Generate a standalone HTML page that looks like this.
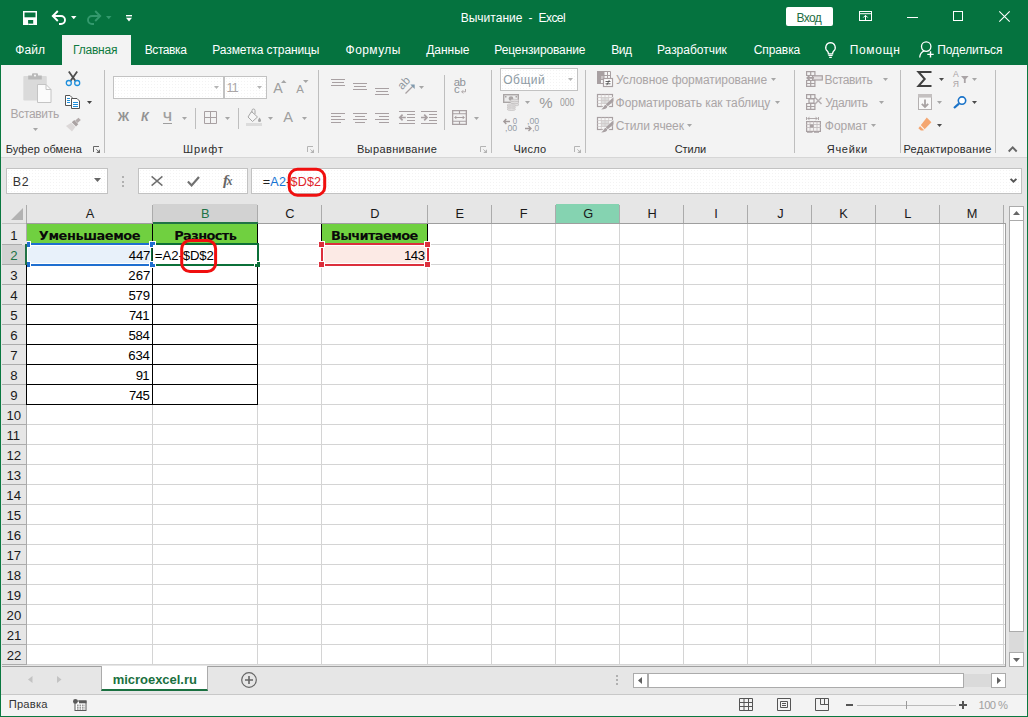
<!DOCTYPE html>
<html lang="ru"><head><meta charset="utf-8"><title>Excel</title>
<style>
*{box-sizing:border-box;margin:0;padding:0}
html,body{width:1028px;height:717px;overflow:hidden;background:#fff}
body{font-family:"Liberation Sans",sans-serif;font-size:12px;color:#444;position:relative}
.a{position:absolute}
.t{position:absolute;white-space:nowrap;line-height:1}
svg{position:absolute;overflow:visible}
#title{left:0;top:0;width:1028px;height:65px;background:#05733f}
#ribbon{left:1px;top:65px;width:1026px;height:92px;background:#f3f3f3}
#fbar{left:1px;top:157px;width:1026px;height:47px;background:#e6e6e6;border-top:1px solid #d6d6d6}
.tab{color:#fff;font-size:12.4px;top:44px}
.gl{color:#444;font-size:11.6px;top:143px;letter-spacing:.25px}
.dis{color:#a6a6a6}
.sep{width:1px;background:#bebebe}
.ch{position:absolute;top:205px;height:19px;text-align:center;font-size:13.6px;line-height:19px;color:#333}
.rh{position:absolute;left:2px;width:24px;height:20px;text-align:center;font-size:13.6px;line-height:20px;color:#333}
.num{position:absolute;font-size:13.4px;line-height:20px;color:#000;text-align:right;white-space:nowrap}
.hd{position:absolute;font-family:"DejaVu Sans","Liberation Sans",sans-serif;font-weight:bold;font-size:12.6px;line-height:20px;color:#111;text-align:center;white-space:nowrap;background:#70d04a}
</style></head>
<body>
<div class="a" id="title"></div>
<svg style="left:23px;top:11px" width="14" height="14" viewBox="0 0 14 14"><rect x="0.750" y="0.750" width="12.500" height="12.500" fill="none" stroke="#fff" stroke-width="1.500"/><rect x="1" y="6.300" width="12" height="7" fill="#fff"/><rect x="5.300" y="9" width="4.800" height="5" fill="#05733f"/><rect x="5.300" y="12.400" width="4.800" height="1.600" fill="#fff"/><rect x="5.300" y="9" width="4.800" height="3.400" fill="#05733f"/></svg>
<svg style="left:51px;top:10px" width="16" height="15" viewBox="0 0 16 15"><path d="M1.800 6h8.200a4 4 0 0 1 0 8H8" fill="none" stroke="#fff" stroke-width="1.900"/><path d="M6.800 1L1.800 6l5 5" fill="none" stroke="#fff" stroke-width="1.900"/></svg>
<svg style="left:71px;top:16px" width="5.500" height="3.200" viewBox="0 0 5.500 3.200"><path d="M0 0h5.500L2.750 3.200z" fill="#fff"/></svg>
<svg style="left:86px;top:10px" width="16" height="15" viewBox="0 0 16 15"><path d="M14.200 6H6a4 4 0 0 0 0 8h2" fill="none" stroke="#33996d" stroke-width="1.900"/><path d="M9.200 1l5 5-5 5" fill="none" stroke="#33996d" stroke-width="1.900"/></svg>
<svg style="left:106px;top:16px" width="5.500" height="3.200" viewBox="0 0 5.500 3.200"><path d="M0 0h5.500L2.750 3.200z" fill="#33996d"/></svg>
<svg style="left:125.500px;top:14.500px" width="6" height="7" viewBox="0 0 6 7"><rect x="0" y="0" width="6" height="1.400" fill="#fff"/><path d="M0 2.800h6L3 6.600z" fill="#fff"/></svg>
<div class="t" style="left:460.72px;top:11.64px;font-size:12px;color:#fff;letter-spacing:0.007px;">Вычитание</div>
<div class="t" style="left:528.47px;top:11.64px;font-size:12px;color:#fff;letter-spacing:0.57px;">-</div>
<div class="t" style="left:538.52px;top:11.64px;font-size:12px;color:#fff;letter-spacing:-0.564px;">Excel</div>
<div class="a" style="left:786px;top:7px;width:47px;height:19px;background:#fff;border-radius:2px"></div>
<div class="t" style="left:796.62px;top:11.64px;font-size:12px;color:#1e6e44;letter-spacing:-0.697px;">Вход</div>
<svg style="left:859px;top:10.500px" width="13" height="10" viewBox="0 0 13 10"><rect x="0.500" y="0.500" width="12" height="9" fill="none" stroke="#fff"/><path d="M0.500 2.700h12M6.500 9V4.500M4.300 6.500l2.200-2.200 2.200 2.200" fill="none" stroke="#fff"/></svg>
<div class="a" style="left:907px;top:17px;width:11px;height:1px;background:#fff"></div>
<div class="a" style="left:953px;top:11px;width:10px;height:10px;border:1px solid #fff"></div>
<svg style="left:999px;top:11px" width="11" height="11" viewBox="0 0 11 11"><path d="M0.3 0.3l10.4 10.4M10.7 0.3L0.3 10.7" stroke="#fff" stroke-width="1.1"/></svg>
<div class="a" style="left:62px;top:35px;width:69px;height:30px;background:#f3f3f3"></div>
<div class="t" style="left:15.31px;top:44.24px;font-size:12px;color:#fff;letter-spacing:0.107px;">Файл</div>
<div class="t" style="left:73.02px;top:44.24px;font-size:12px;color:#0e7a40;letter-spacing:-0.205px;">Главная</div>
<div class="t" style="left:144.72px;top:44.24px;font-size:12px;color:#fff;letter-spacing:-0.415px;">Вставка</div>
<div class="t" style="left:212.32px;top:44.24px;font-size:12px;color:#fff;letter-spacing:-0.107px;">Разметка страницы</div>
<div class="t" style="left:345.61px;top:44.24px;font-size:12px;color:#fff;letter-spacing:0.429px;">Формулы</div>
<div class="t" style="left:426.21px;top:44.24px;font-size:12px;color:#fff;letter-spacing:-0.006px;">Данные</div>
<div class="t" style="left:494.32px;top:44.24px;font-size:12px;color:#fff;letter-spacing:-0.118px;">Рецензирование</div>
<div class="t" style="left:611.32px;top:44.24px;font-size:12px;color:#fff;letter-spacing:-0.56px;">Вид</div>
<div class="t" style="left:657.02px;top:44.24px;font-size:12px;color:#fff;letter-spacing:-0.015px;">Разработчик</div>
<div class="t" style="left:753.69px;top:44.24px;font-size:12px;color:#fff;letter-spacing:-0.084px;">Справка</div>
<div class="t" style="left:849.73px;top:44.24px;font-size:12px;color:#fff;letter-spacing:0.676px;">Помощн</div>
<div class="t" style="left:937.33px;top:44.24px;font-size:12px;color:#fff;letter-spacing:-0.125px;">Поделиться</div>
<svg style="left:825px;top:42px" width="11" height="16" viewBox="0 0 11 16"><path d="M5.500 0.700a4.800 4.800 0 0 1 3 8.500c-.7.700-.9 1.400-.9 2.600H3.400c0-1.200-.2-1.900-.9-2.600A4.800 4.800 0 0 1 5.500 .7z" fill="none" stroke="#fff" stroke-width="1.300"/><path d="M3.400 13.300h4.200M4.200 15.300h2.600" stroke="#fff" stroke-width="1.200"/></svg>
<svg style="left:919px;top:41px" width="16" height="17" viewBox="0 0 16 17"><circle cx="7.200" cy="5.600" r="4.700" fill="none" stroke="#fff" stroke-width="1.300"/><path d="M0.700 16.500c.3-3.500 2-5.600 4.300-6.600" fill="none" stroke="#fff" stroke-width="1.300"/><path d="M11.500 10.200v6.400M8.300 13.400h6.400" stroke="#fff" stroke-width="1.400"/></svg>
<div class="a" id="ribbon"></div>
<div class="a sep" style="left:104px;top:70px;height:83px"></div>
<div class="a sep" style="left:318px;top:70px;height:83px"></div>
<div class="a sep" style="left:491px;top:70px;height:83px"></div>
<div class="a sep" style="left:585px;top:70px;height:83px"></div>
<div class="a sep" style="left:794px;top:70px;height:83px"></div>
<div class="a sep" style="left:900px;top:70px;height:83px"></div>
<div class="a sep" style="left:995px;top:70px;height:83px"></div>
<div class="t" style="left:5.7px;top:144.19px;font-size:11px;color:#2b2b2b;letter-spacing:0.132px;">Буфер обмена</div>
<div class="t" style="left:183.1px;top:144.19px;font-size:11px;color:#2b2b2b;letter-spacing:0.915px;">Шрифт</div>
<div class="t" style="left:356.9px;top:144.19px;font-size:11px;color:#2b2b2b;letter-spacing:0.386px;">Выравнивание</div>
<div class="t" style="left:513.44px;top:144.19px;font-size:11px;color:#2b2b2b;letter-spacing:0.252px;">Число</div>
<div class="t" style="left:674.64px;top:144.19px;font-size:11px;color:#2b2b2b;letter-spacing:-0.042px;">Стили</div>
<div class="t" style="left:826.78px;top:144.19px;font-size:11px;color:#2b2b2b;letter-spacing:0.717px;">Ячейки</div>
<div class="t" style="left:903.4px;top:144.19px;font-size:11px;color:#2b2b2b;letter-spacing:0.313px;">Редактирование</div>
<svg style="left:93px;top:146px" width="8" height="8" viewBox="0 0 8 8"><path d="M0.500 6V0.500H6" fill="none" stroke="#666"/><path d="M7 3.200V7H3.200z" fill="#666"/><path d="M3.300 3.300L5.500 5.500" stroke="#666" stroke-width=".9"/></svg>
<svg style="left:307px;top:146px" width="8" height="8" viewBox="0 0 8 8"><path d="M0.500 6V0.500H6" fill="none" stroke="#b4b4b4"/><path d="M7 3.200V7H3.200z" fill="#b4b4b4"/><path d="M3.300 3.300L5.500 5.500" stroke="#b4b4b4" stroke-width=".9"/></svg>
<svg style="left:480px;top:146px" width="8" height="8" viewBox="0 0 8 8"><path d="M0.500 6V0.500H6" fill="none" stroke="#b4b4b4"/><path d="M7 3.200V7H3.200z" fill="#b4b4b4"/><path d="M3.300 3.300L5.500 5.500" stroke="#b4b4b4" stroke-width=".9"/></svg>
<svg style="left:574px;top:146px" width="8" height="8" viewBox="0 0 8 8"><path d="M0.500 6V0.500H6" fill="none" stroke="#b4b4b4"/><path d="M7 3.200V7H3.200z" fill="#b4b4b4"/><path d="M3.300 3.300L5.500 5.500" stroke="#b4b4b4" stroke-width=".9"/></svg>
<svg style="left:1007.800px;top:146px" width="9.400" height="6" viewBox="0 0 9.400 6"><path d="M0.700 5.500L4.700 1.300l4 4.200" fill="none" stroke="#666" stroke-width="1.900"/></svg>
<svg style="left:23px;top:73px" width="29" height="30" viewBox="0 0 29 30"><rect x="0.300" y="3" width="23.500" height="24.600" rx="1" fill="#dadada"/><path d="M5.200 2.500h3.800V1.200a1 1 0 0 1 1-1h4a1 1 0 0 1 1 1v1.300h3.800v4.100H5.200z" fill="#b9b9b9"/><circle cx="12" cy="2.600" r="1.100" fill="#f3f3f3"/><path d="M14.500 11.500h8.500l5 5V29.500h-13.500z" fill="#fbfbfb" stroke="#c4c4c4"/><path d="M23 11.500v5h5" fill="none" stroke="#c4c4c4"/></svg>
<div class="t" style="left:10.62px;top:107.54px;font-size:12px;color:#aaa5a6;letter-spacing:-0.332px;">Вставить</div>
<svg style="left:33px;top:128px" width="5" height="3" viewBox="0 0 5 3"><path d="M0 0h5L2.5 3z" fill="#a6a6a6"/></svg>
<svg style="left:65px;top:71px" width="16" height="16" viewBox="0 0 16 16"><path d="M3.800 0.500l6.700 9.500M12.200 0.500L5.500 10" stroke="#4d4d4d" stroke-width="1.800" fill="none"/><circle cx="3.800" cy="12" r="2.500" fill="none" stroke="#1e8fdc" stroke-width="1.300"/><circle cx="12.200" cy="12" r="2.500" fill="none" stroke="#1e8fdc" stroke-width="1.300"/></svg>
<svg style="left:65px;top:95px" width="16" height="14" viewBox="0 0 16 14"><path d="M0.500 0.500h4.500l2 2v8h-6.500z" fill="#fff" stroke="#555"/><path d="M2 3.500h3M2 5.500h3M2 7.500h3" stroke="#1e8fdc"/><path d="M6.500 3.500h5.500l2.500 2.500v7.500h-8z" fill="#fff" stroke="#555"/><path d="M8 7.500h5M8 9.500h5M8 11.500h5" stroke="#1e8fdc"/></svg>
<svg style="left:87px;top:101px" width="5" height="3" viewBox="0 0 5 3"><path d="M0 0h5L2.5 3z" fill="#444"/></svg>
<svg style="left:65px;top:117px" width="17" height="15" viewBox="0 0 17 15"><path d="M13.500 0.800l2.300 2.300-3.300 3-2.300-2.500z" fill="#b4acac"/><path d="M9.300 3l4 4.200-2.300 2.200-4.200-4.200z" fill="#aaa2a2"/><path d="M6.200 5.800l4.200 4.200-3.400 4.500-6-5.500z" fill="#dcd8d8"/></svg>
<div class="a" style="left:113px;top:76px;width:111px;height:23px;background:#fff radial-gradient(circle,#f3f3f3 .55px,transparent .75px) 0 0/3px 3px;border:1px solid #c2c2c2"></div>
<div class="a" style="left:224px;top:76px;width:43px;height:23px;background:#fff radial-gradient(circle,#f3f3f3 .55px,transparent .75px) 0 0/3px 3px;border:1px solid #c2c2c2"></div>
<svg style="left:214px;top:86px" width="5" height="3" viewBox="0 0 5 3"><path d="M0 0h5L2.5 3z" fill="#b5b5b5"/></svg>
<svg style="left:257px;top:86px" width="5" height="3" viewBox="0 0 5 3"><path d="M0 0h5L2.5 3z" fill="#b5b5b5"/></svg>
<div class="t" style="left:226.56px;top:81.5px;font-size:12.4px;color:#aaa5a6;letter-spacing:-0.743px;">11</div>
<div class="t" style="left:273.27px;top:81.18px;font-size:14.2px;color:#9e9e9e;letter-spacing:0.584px;">A</div>
<svg style="left:281px;top:80px" width="5.500" height="3" viewBox="0 0 5.500 3"><path d="M0 3h5.500L2.750 0z" fill="#a6a6a6"/></svg>
<div class="t" style="left:296.28px;top:83.55px;font-size:11.4px;color:#9e9e9e;letter-spacing:0.141px;">A</div>
<svg style="left:303px;top:80px" width="5.5" height="3" viewBox="0 0 5.5 3"><path d="M0 0h5.5L2.75 3z" fill="#a6a6a6"/></svg>
<div class="t" style="left:117.74px;top:111.13px;font-size:12.6px;color:#939393;letter-spacing:0.814px;font-weight:bold;">Ж</div>
<div class="t" style="left:140.98px;top:111.13px;font-size:12.6px;color:#939393;letter-spacing:0.056px;font-weight:bold;font-style:italic;">К</div>
<div class="t" style="left:163.12px;top:111.13px;font-size:12.6px;color:#a0a0a0;letter-spacing:0.373px;font-weight:bold;">Ч</div>
<div class="a" style="left:163px;top:123px;width:9px;height:1px;background:#9e9e9e"></div>
<svg style="left:182px;top:117px" width="5" height="3" viewBox="0 0 5 3"><path d="M0 0h5L2.5 3z" fill="#a6a6a6"/></svg>
<div class="a sep" style="left:195px;top:108px;height:21px"></div>
<svg style="left:204px;top:111px" width="13" height="13" viewBox="0 0 13 13"><path d="M0.500 0.500h12v12h-12zM6.500 0.500v12M0.500 6.500h12" fill="none" stroke="#a8a0a2"/></svg>
<svg style="left:225px;top:117px" width="5" height="3" viewBox="0 0 5 3"><path d="M0 0h5L2.5 3z" fill="#a6a6a6"/></svg>
<div class="a sep" style="left:238px;top:108px;height:21px"></div>
<svg style="left:246px;top:109px" width="17" height="17" viewBox="0 0 17 17"><path d="M5.500 2.500l6 5.500-5 4.500-4.500-4.500z" fill="#f6f6f6" stroke="#a6a6a6"/><path d="M6 4V1.500a1.500 1.500 0 0 1 3 0V5" fill="none" stroke="#a6a6a6"/><path d="M13.500 8.500c1 1.500 1.500 2.300 1.500 3a1.500 1.500 0 0 1-3 0c0-.7.500-1.500 1.500-3z" fill="#a6a6a6"/><rect x="0" y="14" width="16" height="3" fill="#dcdcdc"/></svg>
<svg style="left:268px;top:117px" width="5" height="3" viewBox="0 0 5 3"><path d="M0 0h5L2.5 3z" fill="#a6a6a6"/></svg>
<div class="t" style="left:283.27px;top:110.04px;font-size:14.6px;color:#9e9e9e;letter-spacing:0.319px;">A</div>
<svg style="left:302px;top:117px" width="5" height="3" viewBox="0 0 5 3"><path d="M0 0h5L2.5 3z" fill="#a6a6a6"/></svg>
<svg style="left:331px;top:79px" width="14" height="9" viewBox="0 0 14 9"><rect x="0.0" y="0" width="14" height="1" fill="#a8a0a2"/><rect x="1.0" y="3" width="12" height="1" fill="#a8a0a2"/><rect x="0.0" y="6" width="14" height="1" fill="#a8a0a2"/></svg>
<svg style="left:353px;top:83px" width="14" height="9" viewBox="0 0 14 9"><rect x="0.0" y="0" width="14" height="1" fill="#a8a0a2"/><rect x="1.0" y="3" width="12" height="1" fill="#a8a0a2"/><rect x="0.0" y="6" width="14" height="1" fill="#a8a0a2"/></svg>
<svg style="left:375px;top:88px" width="14" height="9" viewBox="0 0 14 9"><rect x="0.0" y="0" width="14" height="1" fill="#a8a0a2"/><rect x="1.0" y="3" width="12" height="1" fill="#a8a0a2"/><rect x="0.0" y="6" width="14" height="1" fill="#a8a0a2"/></svg>
<svg style="left:331px;top:113px" width="14" height="12" viewBox="0 0 14 12"><rect x="0" y="0" width="14" height="1" fill="#a8a0a2"/><rect x="0" y="3" width="10" height="1" fill="#a8a0a2"/><rect x="0" y="6" width="14" height="1" fill="#a8a0a2"/><rect x="0" y="9" width="10" height="1" fill="#a8a0a2"/></svg>
<svg style="left:353px;top:113px" width="14" height="12" viewBox="0 0 14 12"><rect x="0.0" y="0" width="14" height="1" fill="#a8a0a2"/><rect x="2.0" y="3" width="10" height="1" fill="#a8a0a2"/><rect x="0.0" y="6" width="14" height="1" fill="#a8a0a2"/><rect x="2.0" y="9" width="10" height="1" fill="#a8a0a2"/></svg>
<svg style="left:375px;top:113px" width="14" height="12" viewBox="0 0 14 12"><rect x="0" y="0" width="14" height="1" fill="#a8a0a2"/><rect x="4" y="3" width="10" height="1" fill="#a8a0a2"/><rect x="0" y="6" width="14" height="1" fill="#a8a0a2"/><rect x="4" y="9" width="10" height="1" fill="#a8a0a2"/></svg>
<svg style="left:398px;top:78px" width="18" height="17" viewBox="0 0 18 17"><text x="0" y="0" font-size="11.400" font-family="Liberation Sans,sans-serif" fill="#8e969e" transform="translate(4.200 12.200) rotate(-47)">ab</text><path d="M7.500 15.500L15 8" fill="none" stroke="#a8a0a2" stroke-width="1.300"/><path d="M12.300 6.500h4.400v4.400z" fill="#7f9aae"/></svg>
<svg style="left:419px;top:86px" width="5" height="3" viewBox="0 0 5 3"><path d="M0 0h5L2.5 3z" fill="#a6a6a6"/></svg>
<svg style="left:399px;top:111px" width="16" height="13" viewBox="0 0 16 13"><path d="M0 0.500h16M8 3.500h8M8 6.500h8M8 9.500h8M0 12.500h16" stroke="#a8a0a2"/><path d="M6.800 6.500H1M3.600 3.600L0.800 6.500l2.800 2.900" fill="none" stroke="#a8a0a2" stroke-width="1.700"/></svg>
<svg style="left:421px;top:111px" width="16" height="13" viewBox="0 0 16 13"><path d="M0 0.500h16M8 3.500h8M8 6.500h8M8 9.500h8M0 12.500h16" stroke="#a8a0a2"/><path d="M0 6.500h5.800M3.200 3.600L6 6.500 3.200 9.400" fill="none" stroke="#a8a0a2" stroke-width="1.700"/></svg>
<div class="a sep" style="left:444px;top:75px;height:55px"></div>
<div class="t" style="left:453.72px;top:76.75px;font-size:11.4px;color:#8e9298;letter-spacing:-0.617px;">ab</div>
<div class="t" style="left:454.12px;top:84.15px;font-size:11.4px;color:#8e9298;letter-spacing:-0.515px;">c</div>
<svg style="left:460.500px;top:89px" width="5" height="5" viewBox="0 0 5 5"><path d="M4.500 0v2.800H0.800M2.200 1.200L0.700 2.800l1.500 1.600" fill="none" stroke="#a8a0a2" stroke-width=".9"/></svg>
<svg style="left:452px;top:110px" width="15" height="15" viewBox="0 0 15 15"><path d="M0.650 0.650h13.700v13.700h-13.700z" fill="none" stroke="#a8a0a2" stroke-width="1.300"/><path d="M0.500 3.700h14M0.500 11.300h14M7.500 0.500v3.200M7.500 11.300v3.200" fill="none" stroke="#a8a0a2" stroke-width="1.100"/><path d="M2.800 7.500h9.400M4.400 5.900L2.800 7.500l1.600 1.600M10.600 5.900l1.600 1.600-1.600 1.600" fill="none" stroke="#a8a0a2"/></svg>
<svg style="left:474.2px;top:117px" width="5" height="3" viewBox="0 0 5 3"><path d="M0 0h5L2.5 3z" fill="#a6a6a6"/></svg>
<div class="a" style="left:500px;top:68px;width:78px;height:23px;background:#fff radial-gradient(circle,#f3f3f3 .55px,transparent .75px) 0 0/3px 3px;border:1px solid #c2c2c2"></div>
<div class="t" style="left:503.23px;top:73.84px;font-size:12px;color:#8e9ba4;letter-spacing:0.479px;">Общий</div>
<svg style="left:568px;top:78px" width="5" height="3" viewBox="0 0 5 3"><path d="M0 0h5L2.5 3z" fill="#b5b5b5"/></svg>
<svg style="left:503px;top:94px" width="17" height="17" viewBox="0 0 17 17"><rect x="0.700" y="0.700" width="14.600" height="7.600" fill="#ececec" stroke="#aaa6a6" stroke-width="1.400"/><circle cx="8" cy="4.500" r="2.300" fill="#aaa6a6"/><rect x="2" y="2" width="1.500" height="1.500" fill="#aaa6a6"/><rect x="12.500" y="2" width="1.500" height="1.500" fill="#aaa6a6"/><g fill="#e2e0e0" stroke="#c2bebe" stroke-width=".7"><ellipse cx="11.800" cy="6.600" rx="4.200" ry="1.300"/><ellipse cx="11.800" cy="8.600" rx="4.200" ry="1.300"/><ellipse cx="11.800" cy="10.600" rx="4.200" ry="1.300"/><ellipse cx="8.300" cy="11.200" rx="4.200" ry="1.300"/><ellipse cx="8.300" cy="13.200" rx="4.200" ry="1.300"/><ellipse cx="8.300" cy="15.200" rx="4.200" ry="1.300"/></g></svg>
<svg style="left:525px;top:101px" width="5" height="3" viewBox="0 0 5 3"><path d="M0 0h5L2.5 3z" fill="#a6a6a6"/></svg>
<div class="t" style="left:539.17px;top:95.3px;font-size:15px;color:#9a9a9a;letter-spacing:0.032px;">%</div>
<div class="t" style="left:559.500px;top:97.500px;font-size:10px;color:#9a9a9a;transform:scaleX(.86);transform-origin:0 0">000</div>
<svg style="left:503px;top:118px" width="15" height="15" viewBox="0 0 15 15"><text x="9.800" y="5.800" font-size="8.800" font-family="Liberation Sans,sans-serif" fill="#939ca6" textLength="4.400" lengthAdjust="spacingAndGlyphs">0</text><text x="2" y="13.200" font-size="8.800" font-family="Liberation Sans,sans-serif" fill="#939ca6" textLength="12.200" lengthAdjust="spacingAndGlyphs">,00</text><path d="M7 3.500H0.800M3.300 1L0.800 3.500 3.300 6" fill="none" stroke="#a29a9a" stroke-width="1.300"/></svg>
<svg style="left:525px;top:118px" width="15" height="15" viewBox="0 0 15 15"><text x="2" y="5.800" font-size="8.800" font-family="Liberation Sans,sans-serif" fill="#939ca6" textLength="12.200" lengthAdjust="spacingAndGlyphs">,00</text><text x="7.200" y="13.200" font-size="8.800" font-family="Liberation Sans,sans-serif" fill="#939ca6" textLength="7" lengthAdjust="spacingAndGlyphs">,0</text><path d="M0 10.500h6M3.500 8L6 10.500 3.500 13" fill="none" stroke="#a29a9a" stroke-width="1.300"/></svg>
<div class="t" style="left:615.98px;top:73.84px;font-size:12px;color:#aaa5a6;letter-spacing:-0.067px;">Условное форматирование</div>
<svg style="left:771px;top:77.8px" width="5" height="3" viewBox="0 0 5 3"><path d="M0 0h5L2.5 3z" fill="#a6a6a6"/></svg>
<div class="t" style="left:615.61px;top:96.84px;font-size:12px;color:#aaa5a6;letter-spacing:-0.058px;">Форматировать как таблицу</div>
<svg style="left:775px;top:100.8px" width="5" height="3" viewBox="0 0 5 3"><path d="M0 0h5L2.5 3z" fill="#a6a6a6"/></svg>
<div class="t" style="left:615.69px;top:119.84px;font-size:12px;color:#aaa5a6;letter-spacing:-0.1px;">Стили ячеек</div>
<svg style="left:687px;top:123.8px" width="5" height="3" viewBox="0 0 5 3"><path d="M0 0h5L2.5 3z" fill="#a6a6a6"/></svg>
<svg style="left:597px;top:71px" width="17" height="16" viewBox="0 0 17 16"><rect x="0" y="0" width="14" height="13" fill="#f6f6f6"/><rect x="0" y="0" width="7" height="5" fill="#a8a0a2"/><rect x="0" y="5" width="4" height="8" fill="#a8a0a2"/><rect x="4" y="5" width="3" height="3" fill="#c9c4c5"/><path d="M0.500 0.500h13v12h-13zM0.500 4.500h13M0.500 8.500h13M7 0.500v12M10.500 0.500v12" stroke="#a8a0a2" fill="none"/><rect x="6.500" y="7.500" width="9" height="8" fill="#fff" stroke="#a8a0a2" stroke-width="1.200"/><path d="M8.500 10.500h5M8.500 12.800h5M12.200 9.200l-2.400 5" stroke="#555" stroke-width=".9" fill="none"/></svg>
<svg style="left:597px;top:94px" width="17" height="16" viewBox="0 0 17 16"><rect x="0.500" y="0.500" width="15" height="12" fill="#f8f8f8" stroke="#a8a0a2" stroke-width="1.200"/><rect x="4" y="3.500" width="8" height="6" fill="#dcdcdc"/><path d="M0.500 3.500h15M0.500 6.500h15M0.500 9.500h15M4.300 0.500v12M8 0.500v12M11.700 0.500v12" stroke="#cfcaca" fill="none" stroke-width=".8"/><path d="M17 1.500L9.500 10l-2 0L5 13.500 3.500 16h6l2.500-3.500L17 6z" fill="#f3f3f3"/><path d="M16.500 3.200v4L10.800 12.200 8.800 10.200z" fill="#a8a0a2"/><path d="M8 11c1.300-.3 2.400.8 2.200 2-.3 1.600-2.500 2.300-6 2.600 1.800-1.200 2.300-3 3.800-4.600z" fill="#a8a0a2"/></svg>
<svg style="left:597px;top:117px" width="17" height="16" viewBox="0 0 17 16"><rect x="0.500" y="0.500" width="15" height="12" fill="#f8f8f8" stroke="#a8a0a2" stroke-width="1.200"/><rect x="4" y="3.500" width="8" height="6" fill="#dcdcdc"/><path d="M0.500 3.500h15M0.500 6.500h15M0.500 9.500h15M4.300 0.500v12M8 0.500v12M11.700 0.500v12" stroke="#cfcaca" fill="none" stroke-width=".8"/><path d="M17 1.500L9.500 10l-2 0L5 13.500 3.500 16h6l2.500-3.500L17 6z" fill="#f3f3f3"/><path d="M16.500 3.200v4L10.800 12.200 8.800 10.200z" fill="#a8a0a2"/><path d="M8 11c1.300-.3 2.400.8 2.200 2-.3 1.600-2.500 2.300-6 2.600 1.800-1.200 2.300-3 3.800-4.600z" fill="#a8a0a2"/></svg>
<div class="t" style="left:824.52px;top:73.84px;font-size:12px;color:#aaa5a6;letter-spacing:-0.389px;">Вставить</div>
<svg style="left:882.5px;top:77.8px" width="5" height="3" viewBox="0 0 5 3"><path d="M0 0h5L2.5 3z" fill="#a6a6a6"/></svg>
<div class="t" style="left:825.18px;top:96.84px;font-size:12px;color:#aaa5a6;letter-spacing:-0.49px;">Удалить</div>
<svg style="left:878.5px;top:100.8px" width="5" height="3" viewBox="0 0 5 3"><path d="M0 0h5L2.5 3z" fill="#a6a6a6"/></svg>
<div class="t" style="left:824.81px;top:119.84px;font-size:12px;color:#aaa5a6;letter-spacing:-0.039px;">Формат</div>
<svg style="left:871px;top:123.8px" width="5" height="3" viewBox="0 0 5 3"><path d="M0 0h5L2.5 3z" fill="#a6a6a6"/></svg>
<svg style="left:806px;top:71px" width="17" height="16" viewBox="0 0 17 16"><path d="M0.600 0.600h8.300v3.900h-8.300zM4.700 0.600v3.900M0.600 9.500h8.300v5.900h-8.300zM4.700 9.500v5.900M0.600 12.500h8.300" fill="none" stroke="#a8a0a2" stroke-width="1.200"/><rect x="6.500" y="4.800" width="9.800" height="4.200" fill="#e4e0e1" stroke="#a8a0a2" stroke-width="1.200"/><path d="M8 6.900H1.200M3.800 4.300L1.200 6.900l2.600 2.600" fill="none" stroke="#a8a0a2" stroke-width="1.600"/></svg>
<svg style="left:806px;top:94px" width="17" height="16" viewBox="0 0 17 16"><path d="M0.600 0.600h8.300v3.900h-8.300zM4.700 0.600v3.900M0.600 9.500h8.300v5.900h-8.300zM4.700 9.500v5.900M0.600 12.500h8.300M3 4.800h5v4.200h-5z" fill="none" stroke="#a8a0a2" stroke-width="1.200"/><path d="M9 3.500l6.500 6.500M15.500 3.500L9 10" stroke="#b4aeb0" stroke-width="1.500"/></svg>
<svg style="left:806px;top:117px" width="16" height="16" viewBox="0 0 16 16"><path d="M0.500 0v3M12.500 0v3M1.500 1.500h10M3.500 0.200L1.800 1.500l1.700 1.300M9.500 0.200l1.700 1.300-1.700 1.300" stroke="#a8a0a2" fill="none" stroke-width=".9"/><rect x="0.600" y="4.600" width="13.800" height="9.800" fill="#f4f2f2" stroke="#a8a0a2" stroke-width="1.200"/><path d="M0.500 7.500h14M0.500 10.500h14M4 4.500v10M7.500 4.500v10M11 4.500v10" stroke="#c4bec0" fill="none" stroke-width=".9"/><rect x="4" y="7.500" width="3.500" height="3" fill="#a8a0a2"/><path d="M1 15.300h5.500M8 15.300h5" stroke="#a8a0a2" stroke-width="1.100"/></svg>
<svg style="left:917px;top:71px" width="15" height="16" viewBox="0 0 15 16"><path d="M14.500 1H1.500l6.200 7-6.200 7h13" fill="none" stroke="#404040" stroke-width="2" stroke-linejoin="miter"/></svg>
<svg style="left:939px;top:78px" width="5" height="3" viewBox="0 0 5 3"><path d="M0 0h5L2.5 3z" fill="#4a4a4a"/></svg>
<div class="t" style="left:952.88px;top:70.32px;font-size:8.6px;color:#aaa4a6;letter-spacing:-0.003px;">A</div>
<div class="t" style="left:952.8px;top:79.52px;font-size:8.6px;color:#aaa4a6;letter-spacing:0.094px;">Я</div>
<svg style="left:960.800px;top:76px" width="7.600" height="7" viewBox="0 0 7.600 7"><path d="M0 0h7.600L4.700 3.200v3.800h-1.800V3.200z" fill="#aaa4a6"/></svg>
<svg style="left:972px;top:78px" width="5" height="3" viewBox="0 0 5 3"><path d="M0 0h5L2.5 3z" fill="#a6a6a6"/></svg>
<svg style="left:918px;top:94px" width="14" height="16" viewBox="0 0 14 16"><rect x="0.500" y="0.500" width="13" height="15" fill="#f8f8f8" stroke="#b4b0b0"/><rect x="0" y="0" width="14" height="3.600" fill="#c4c0c0"/><path d="M7 5.500v7.500M3.800 9.800l3.200 3.200 3.200-3.200" fill="none" stroke="#a8a2a2" stroke-width="1.800"/></svg>
<svg style="left:937px;top:101px" width="5" height="3" viewBox="0 0 5 3"><path d="M0 0h5L2.5 3z" fill="#a6a6a6"/></svg>
<svg style="left:953px;top:96px" width="14" height="13" viewBox="0 0 14 13"><circle cx="9" cy="4.600" r="3.700" fill="#fff" stroke="#1a73c8" stroke-width="1.600"/><path d="M6 7.600L1 12" stroke="#1a73c8" stroke-width="2.200"/></svg>
<svg style="left:972px;top:101px" width="5" height="3" viewBox="0 0 5 3"><path d="M0 0h5L2.5 3z" fill="#4a4a4a"/></svg>
<svg style="left:918px;top:117px" width="14" height="15" viewBox="0 0 14 15"><path d="M8.800 0.600l4.600 4.600-8 8.400h-2.600l-2.400-2.400z" fill="#f4a670"/><path d="M1.800 8l4.800 4.800" stroke="#fdf3ec" stroke-width="1.100"/></svg>
<svg style="left:937px;top:124px" width="5" height="3" viewBox="0 0 5 3"><path d="M0 0h5L2.5 3z" fill="#4a4a4a"/></svg>
<div class="a" id="fbar"></div>
<div class="a" style="left:6px;top:168px;width:102px;height:26px;background:#fff radial-gradient(circle,#f3f3f3 .55px,transparent .75px) 0 0/3px 3px;border:1px solid #c2c2c2"></div>
<div class="t" style="left:12.68px;top:175.5px;font-size:12.4px;color:#333;letter-spacing:0.874px;">B2</div>
<svg style="left:94px;top:178px" width="7" height="4" viewBox="0 0 7 4"><path d="M0 0h7L3.500 4z" fill="#666"/></svg>
<div class="a" style="left:122px;top:176px;width:2px;height:2px;background:#b0b0b0"></div>
<div class="a" style="left:122px;top:180.5px;width:2px;height:2px;background:#b0b0b0"></div>
<div class="a" style="left:122px;top:185px;width:2px;height:2px;background:#b0b0b0"></div>
<div class="a" style="left:138px;top:168px;width:110px;height:26px;background:#fff radial-gradient(circle,#f3f3f3 .55px,transparent .75px) 0 0/3px 3px;border:1px solid #c2c2c2"></div>
<svg style="left:151px;top:176px" width="12" height="10" viewBox="0 0 12 10"><path d="M0.600 0.400l10.800 9.200M11.400 0.400L0.600 9.600" stroke="#707070" stroke-width="1.500"/></svg>
<svg style="left:187px;top:176px" width="13" height="11" viewBox="0 0 13 11"><path d="M0.900 5.600l3.700 3.800L12 1" fill="none" stroke="#707070" stroke-width="2.200"/></svg>
<div class="t" style="left:223px;top:171.500px;font-family:'Liberation Serif',serif;font-style:italic;font-weight:bold;font-size:15.500px;color:#666">f<span style="font-size:11.500px;position:relative;left:-1.500px;top:.5px">x</span></div>
<div class="a" style="left:251px;top:168px;width:771px;height:26px;background:#fff radial-gradient(circle,#f3f3f3 .55px,transparent .75px) 0 0/3px 3px;border:1px solid #c2c2c2"></div>
<div class="t" style="left:262.78px;top:175.93px;font-size:12.6px;color:#222;letter-spacing:0.18px;">=<span style="color:#1572d3">A2</span>-<span style="color:#e0252b">$D$2</span></div>
<svg style="left:1010px;top:178px" width="7" height="5" viewBox="0 0 7 5"><path d="M0.600 0.800L3.500 3.700 6.400 0.800" fill="none" stroke="#555" stroke-width="1.900"/></svg>
<svg style="left:0;top:0" width="1028" height="300" viewBox="0 0 1028 300"><rect x="289.200" y="169.300" width="35.500" height="25.900" rx="8.300" fill="none" stroke="#f00f0f" stroke-width="3"/></svg>
<div class="a" style="left:1px;top:204px;width:1026px;height:462px;background:#e6e6e6"></div>
<div class="a" style="left:27px;top:224px;width:978px;height:441px;background:#fff"></div>
<svg style="left:11px;top:208px" width="12" height="12" viewBox="0 0 12 12"><path d="M12 0v12H0z" fill="#b2b2b2"/></svg>
<div class="a" style="left:152px;top:205px;width:1px;height:18px;background:#ababab"></div>
<div class="a" style="left:153px;top:204px;width:104px;height:19px;background:#d2d2d2;"></div>
<div class="a" style="left:257px;top:205px;width:1px;height:18px;background:#ababab"></div>
<div class="a" style="left:321px;top:205px;width:1px;height:18px;background:#ababab"></div>
<div class="a" style="left:427px;top:205px;width:1px;height:18px;background:#ababab"></div>
<div class="a" style="left:491px;top:205px;width:1px;height:18px;background:#ababab"></div>
<div class="a" style="left:555px;top:205px;width:1px;height:18px;background:#ababab"></div>
<div class="a" style="left:556px;top:204px;width:63px;height:19px;background:#85d3b1;"></div>
<div class="a" style="left:619px;top:205px;width:1px;height:18px;background:#ababab"></div>
<div class="a" style="left:683px;top:205px;width:1px;height:18px;background:#ababab"></div>
<div class="a" style="left:747px;top:205px;width:1px;height:18px;background:#ababab"></div>
<div class="a" style="left:811px;top:205px;width:1px;height:18px;background:#ababab"></div>
<div class="a" style="left:875px;top:205px;width:1px;height:18px;background:#ababab"></div>
<div class="a" style="left:939px;top:205px;width:1px;height:18px;background:#ababab"></div>
<div class="a" style="left:1003px;top:205px;width:1px;height:18px;background:#ababab"></div>
<div class="a" style="left:26px;top:205px;width:1px;height:18px;background:#ababab"></div>
<div class="a" style="left:2px;top:223px;width:24px;height:1px;background:#c4c4c4"></div>
<div class="a" style="left:26px;top:223px;width:979px;height:1px;background:#9e9e9e"></div>
<div class="a" style="left:153px;top:222px;width:105px;height:2px;background:#217346"></div>
<div class="a" style="left:2px;top:244px;width:24px;height:1px;background:#ababab"></div>
<div class="a" style="left:2px;top:245px;width:24px;height:19px;background:#d2d2d2"></div>
<div class="a" style="left:2px;top:264px;width:24px;height:1px;background:#ababab"></div>
<div class="a" style="left:2px;top:284px;width:24px;height:1px;background:#ababab"></div>
<div class="a" style="left:2px;top:304px;width:24px;height:1px;background:#ababab"></div>
<div class="a" style="left:2px;top:324px;width:24px;height:1px;background:#ababab"></div>
<div class="a" style="left:2px;top:344px;width:24px;height:1px;background:#ababab"></div>
<div class="a" style="left:2px;top:364px;width:24px;height:1px;background:#ababab"></div>
<div class="a" style="left:2px;top:384px;width:24px;height:1px;background:#ababab"></div>
<div class="a" style="left:2px;top:404px;width:24px;height:1px;background:#ababab"></div>
<div class="a" style="left:2px;top:424px;width:24px;height:1px;background:#ababab"></div>
<div class="a" style="left:2px;top:444px;width:24px;height:1px;background:#ababab"></div>
<div class="a" style="left:2px;top:464px;width:24px;height:1px;background:#ababab"></div>
<div class="a" style="left:2px;top:484px;width:24px;height:1px;background:#ababab"></div>
<div class="a" style="left:2px;top:504px;width:24px;height:1px;background:#ababab"></div>
<div class="a" style="left:2px;top:524px;width:24px;height:1px;background:#ababab"></div>
<div class="a" style="left:2px;top:544px;width:24px;height:1px;background:#ababab"></div>
<div class="a" style="left:2px;top:564px;width:24px;height:1px;background:#ababab"></div>
<div class="a" style="left:2px;top:584px;width:24px;height:1px;background:#ababab"></div>
<div class="a" style="left:2px;top:604px;width:24px;height:1px;background:#ababab"></div>
<div class="a" style="left:2px;top:624px;width:24px;height:1px;background:#ababab"></div>
<div class="a" style="left:2px;top:644px;width:24px;height:1px;background:#ababab"></div>
<div class="a" style="left:2px;top:664px;width:24px;height:1px;background:#ababab"></div>
<div class="a" style="left:26px;top:224px;width:1px;height:441px;background:#ababab"></div>
<div class="a" style="left:25px;top:244px;width:2px;height:21px;background:#217346"></div>
<div class="a" style="left:152px;top:224px;width:1px;height:441px;background:#d4d4d4"></div>
<div class="a" style="left:257px;top:224px;width:1px;height:441px;background:#d4d4d4"></div>
<div class="a" style="left:321px;top:224px;width:1px;height:441px;background:#d4d4d4"></div>
<div class="a" style="left:427px;top:224px;width:1px;height:441px;background:#d4d4d4"></div>
<div class="a" style="left:491px;top:224px;width:1px;height:441px;background:#d4d4d4"></div>
<div class="a" style="left:555px;top:224px;width:1px;height:441px;background:#d4d4d4"></div>
<div class="a" style="left:619px;top:224px;width:1px;height:441px;background:#d4d4d4"></div>
<div class="a" style="left:683px;top:224px;width:1px;height:441px;background:#d4d4d4"></div>
<div class="a" style="left:747px;top:224px;width:1px;height:441px;background:#d4d4d4"></div>
<div class="a" style="left:811px;top:224px;width:1px;height:441px;background:#d4d4d4"></div>
<div class="a" style="left:875px;top:224px;width:1px;height:441px;background:#d4d4d4"></div>
<div class="a" style="left:939px;top:224px;width:1px;height:441px;background:#d4d4d4"></div>
<div class="a" style="left:1003px;top:224px;width:1px;height:441px;background:#d4d4d4"></div>
<div class="a" style="left:27px;top:244px;width:978px;height:1px;background:#d4d4d4"></div>
<div class="a" style="left:27px;top:264px;width:978px;height:1px;background:#d4d4d4"></div>
<div class="a" style="left:27px;top:284px;width:978px;height:1px;background:#d4d4d4"></div>
<div class="a" style="left:27px;top:304px;width:978px;height:1px;background:#d4d4d4"></div>
<div class="a" style="left:27px;top:324px;width:978px;height:1px;background:#d4d4d4"></div>
<div class="a" style="left:27px;top:344px;width:978px;height:1px;background:#d4d4d4"></div>
<div class="a" style="left:27px;top:364px;width:978px;height:1px;background:#d4d4d4"></div>
<div class="a" style="left:27px;top:384px;width:978px;height:1px;background:#d4d4d4"></div>
<div class="a" style="left:27px;top:404px;width:978px;height:1px;background:#d4d4d4"></div>
<div class="a" style="left:27px;top:424px;width:978px;height:1px;background:#d4d4d4"></div>
<div class="a" style="left:27px;top:444px;width:978px;height:1px;background:#d4d4d4"></div>
<div class="a" style="left:27px;top:464px;width:978px;height:1px;background:#d4d4d4"></div>
<div class="a" style="left:27px;top:484px;width:978px;height:1px;background:#d4d4d4"></div>
<div class="a" style="left:27px;top:504px;width:978px;height:1px;background:#d4d4d4"></div>
<div class="a" style="left:27px;top:524px;width:978px;height:1px;background:#d4d4d4"></div>
<div class="a" style="left:27px;top:544px;width:978px;height:1px;background:#d4d4d4"></div>
<div class="a" style="left:27px;top:564px;width:978px;height:1px;background:#d4d4d4"></div>
<div class="a" style="left:27px;top:584px;width:978px;height:1px;background:#d4d4d4"></div>
<div class="a" style="left:27px;top:604px;width:978px;height:1px;background:#d4d4d4"></div>
<div class="a" style="left:27px;top:624px;width:978px;height:1px;background:#d4d4d4"></div>
<div class="a" style="left:27px;top:644px;width:978px;height:1px;background:#d4d4d4"></div>
<div class="a" style="left:27px;top:664px;width:978px;height:1px;background:#d4d4d4"></div>
<div class="a" style="left:27px;top:224px;width:125px;height:20px;background:#70d040"></div>
<div class="a" style="left:153px;top:224px;width:104px;height:20px;background:#70d040"></div>
<div class="a" style="left:322px;top:224px;width:105px;height:20px;background:#70d040"></div>
<div class="a" style="left:26px;top:244px;width:232px;height:1px;background:#000"></div>
<div class="a" style="left:26px;top:264px;width:232px;height:1px;background:#000"></div>
<div class="a" style="left:26px;top:284px;width:232px;height:1px;background:#000"></div>
<div class="a" style="left:26px;top:304px;width:232px;height:1px;background:#000"></div>
<div class="a" style="left:26px;top:324px;width:232px;height:1px;background:#000"></div>
<div class="a" style="left:26px;top:344px;width:232px;height:1px;background:#000"></div>
<div class="a" style="left:26px;top:364px;width:232px;height:1px;background:#000"></div>
<div class="a" style="left:26px;top:384px;width:232px;height:1px;background:#000"></div>
<div class="a" style="left:26px;top:404px;width:232px;height:1px;background:#000"></div>
<div class="a" style="left:26px;top:264px;width:1px;height:141px;background:#000"></div>
<div class="a" style="left:152px;top:224px;width:1px;height:181px;background:#000"></div>
<div class="a" style="left:257px;top:224px;width:1px;height:181px;background:#000"></div>
<div class="a" style="left:321px;top:224px;width:1px;height:21px;background:#000"></div>
<div class="a" style="left:427px;top:224px;width:1px;height:21px;background:#000"></div>
<div class="a" style="left:28px;top:246px;width:122px;height:17px;background:#e8f1fa"></div>
<div class="a" style="left:27px;top:243px;width:126px;height:2px;background:#1f6fd0"></div>
<div class="a" style="left:27px;top:264px;width:126px;height:2px;background:#1f6fd0"></div>
<div class="a" style="left:27px;top:241px;width:4px;height:7px;background:#fff"></div>
<div class="a" style="left:27px;top:242px;width:3px;height:5px;background:#1f6fd0"></div>
<div class="a" style="left:27px;top:261px;width:4px;height:7px;background:#fff"></div>
<div class="a" style="left:27px;top:262px;width:3px;height:5px;background:#1f6fd0"></div>
<div class="a" style="left:22px;top:241px;width:5px;height:7px;background:#e6e6e6"></div>
<div class="a" style="left:22px;top:245px;width:4px;height:16px;background:#d2d2d2"></div>
<div class="a" style="left:25px;top:244px;width:2px;height:21px;background:#217346"></div>
<div class="a" style="left:323px;top:246px;width:103px;height:17px;background:#fceae5"></div>
<div class="a" style="left:321px;top:243px;width:108px;height:23px;border:2px solid #dc2f3c"></div>
<div class="a" style="left:323px;top:245px;width:104px;height:19px;border:1px solid #fff"></div>
<div class="a" style="left:318px;top:241px;width:7px;height:7px;background:#fff"></div>
<div class="a" style="left:319px;top:242px;width:5px;height:5px;background:#dc2f3c"></div>
<div class="a" style="left:424px;top:241px;width:7px;height:7px;background:#fff"></div>
<div class="a" style="left:425px;top:242px;width:5px;height:5px;background:#dc2f3c"></div>
<div class="a" style="left:318px;top:261px;width:7px;height:7px;background:#fff"></div>
<div class="a" style="left:319px;top:262px;width:5px;height:5px;background:#dc2f3c"></div>
<div class="a" style="left:424px;top:261px;width:7px;height:7px;background:#fff"></div>
<div class="a" style="left:425px;top:262px;width:5px;height:5px;background:#dc2f3c"></div>
<div class="a" style="left:150px;top:245px;width:107px;height:19px;background:#fff"></div>
<div class="a" style="left:151px;top:243px;width:108px;height:23px;border:2px solid #0b7039"></div>
<div class="a" style="left:152px;top:247px;width:1px;height:15px;background:#0f3d22"></div>
<div class="a" style="left:254px;top:261px;width:6px;height:6px;background:#fff"></div>
<div class="a" style="left:255px;top:262px;width:5px;height:5px;background:#0b7039"></div>
<div class="a" style="left:255px;top:262px;width:2px;height:2px;background:#fff"></div>
<div class="a" style="left:149px;top:241px;width:7px;height:7px;background:#fff"></div>
<div class="a" style="left:150px;top:242px;width:5px;height:5px;background:#1f6fd0"></div>
<div class="a" style="left:149px;top:261px;width:7px;height:7px;background:#fff"></div>
<div class="a" style="left:150px;top:262px;width:5px;height:5px;background:#1f6fd0"></div>
<div class="a" style="left:153px;top:245px;width:3px;height:3px;background:#fff"></div>
<div class="a" style="left:153px;top:261px;width:3px;height:3px;background:#fff"></div>
<div class="t" style="left:85.73px;top:208.16px;font-size:12.8px;color:#1a1a1a;letter-spacing:0.0px;">A</div>
<div class="t" style="left:201.04px;top:208.16px;font-size:12.8px;color:#217346;letter-spacing:0.0px;">B</div>
<div class="t" style="left:285.3px;top:208.16px;font-size:12.8px;color:#1a1a1a;letter-spacing:0.0px;">C</div>
<div class="t" style="left:370.16px;top:208.16px;font-size:12.8px;color:#1a1a1a;letter-spacing:-0.0px;">D</div>
<div class="t" style="left:455.48px;top:208.16px;font-size:12.8px;color:#1a1a1a;letter-spacing:0.0px;">E</div>
<div class="t" style="left:519.82px;top:208.16px;font-size:12.8px;color:#1a1a1a;letter-spacing:-0.0px;">F</div>
<div class="t" style="left:583.18px;top:208.16px;font-size:12.8px;color:#1a1a1a;letter-spacing:0.0px;">G</div>
<div class="t" style="left:647.38px;top:208.16px;font-size:12.8px;color:#1a1a1a;letter-spacing:0.0px;">H</div>
<div class="t" style="left:714.22px;top:208.16px;font-size:12.8px;color:#1a1a1a;letter-spacing:-0.0px;">I</div>
<div class="t" style="left:777.17px;top:208.16px;font-size:12.8px;color:#1a1a1a;letter-spacing:0.0px;">J</div>
<div class="t" style="left:839.28px;top:208.16px;font-size:12.8px;color:#1a1a1a;letter-spacing:0.0px;">K</div>
<div class="t" style="left:904.13px;top:208.16px;font-size:12.8px;color:#1a1a1a;letter-spacing:-0.0px;">L</div>
<div class="t" style="left:966.67px;top:208.16px;font-size:12.8px;color:#1a1a1a;letter-spacing:0.0px;">M</div>
<div class="t" style="left:10.15px;top:228.53px;font-size:13.2px;color:#1a1a1a;letter-spacing:0.0px;">1</div>
<div class="t" style="left:10.33px;top:248.53px;font-size:13.2px;color:#217346;letter-spacing:0.0px;">2</div>
<div class="t" style="left:10.37px;top:268.53px;font-size:13.2px;color:#1a1a1a;letter-spacing:-0.0px;">3</div>
<div class="t" style="left:10.37px;top:288.53px;font-size:13.2px;color:#1a1a1a;letter-spacing:-0.0px;">4</div>
<div class="t" style="left:10.34px;top:308.53px;font-size:13.2px;color:#1a1a1a;letter-spacing:-0.0px;">5</div>
<div class="t" style="left:10.28px;top:328.53px;font-size:13.2px;color:#1a1a1a;letter-spacing:0.0px;">6</div>
<div class="t" style="left:10.32px;top:348.53px;font-size:13.2px;color:#1a1a1a;letter-spacing:-0.0px;">7</div>
<div class="t" style="left:10.33px;top:368.53px;font-size:13.2px;color:#1a1a1a;letter-spacing:-0.0px;">8</div>
<div class="t" style="left:10.33px;top:388.53px;font-size:13.2px;color:#1a1a1a;letter-spacing:-0.0px;">9</div>
<div class="t" style="left:6.41px;top:408.53px;font-size:13.2px;color:#1a1a1a;letter-spacing:-0.0px;">10</div>
<div class="t" style="left:6.48px;top:428.53px;font-size:13.2px;color:#1a1a1a;letter-spacing:-0.0px;">11</div>
<div class="t" style="left:6.49px;top:448.53px;font-size:13.2px;color:#1a1a1a;letter-spacing:0.0px;">12</div>
<div class="t" style="left:6.45px;top:468.53px;font-size:13.2px;color:#1a1a1a;letter-spacing:-0.0px;">13</div>
<div class="t" style="left:6.35px;top:488.53px;font-size:13.2px;color:#1a1a1a;letter-spacing:-0.0px;">14</div>
<div class="t" style="left:6.43px;top:508.53px;font-size:13.2px;color:#1a1a1a;letter-spacing:0.0px;">15</div>
<div class="t" style="left:6.45px;top:528.53px;font-size:13.2px;color:#1a1a1a;letter-spacing:-0.0px;">16</div>
<div class="t" style="left:6.49px;top:548.53px;font-size:13.2px;color:#1a1a1a;letter-spacing:0.0px;">17</div>
<div class="t" style="left:6.44px;top:568.53px;font-size:13.2px;color:#1a1a1a;letter-spacing:0.0px;">18</div>
<div class="t" style="left:6.47px;top:588.53px;font-size:13.2px;color:#1a1a1a;letter-spacing:0.0px;">19</div>
<div class="t" style="left:6.58px;top:608.53px;font-size:13.2px;color:#1a1a1a;letter-spacing:0.0px;">20</div>
<div class="t" style="left:6.65px;top:628.53px;font-size:13.2px;color:#1a1a1a;letter-spacing:0.0px;">21</div>
<div class="t" style="left:6.66px;top:648.53px;font-size:13.2px;color:#1a1a1a;letter-spacing:-0.0px;">22</div>
<div class="t" style="left:38.83px;top:229.21px;font-size:13px;color:#0a0a0a;letter-spacing:-0.463px;font-weight:bold;font-family:'DejaVu Sans','Liberation Sans',sans-serif;">Уменьшаемое</div>
<div class="t" style="left:174.21px;top:229.21px;font-size:13px;color:#0a0a0a;letter-spacing:-0.638px;font-weight:bold;font-family:'DejaVu Sans','Liberation Sans',sans-serif;">Разность</div>
<div class="t" style="left:330.91px;top:229.21px;font-size:13px;color:#0a0a0a;letter-spacing:-0.653px;font-weight:bold;font-family:'DejaVu Sans','Liberation Sans',sans-serif;">Вычитаемое</div>
<div class="t" style="left:128.7px;top:248.93px;font-size:13.2px;color:#000;letter-spacing:-0.128px;">447</div>
<div class="t" style="left:128.34px;top:268.93px;font-size:13.2px;color:#000;letter-spacing:0.052px;">267</div>
<div class="t" style="left:128.47px;top:288.93px;font-size:13.2px;color:#000;letter-spacing:-0.235px;">579</div>
<div class="t" style="left:128.92px;top:308.93px;font-size:13.2px;color:#000;letter-spacing:-0.701px;">741</div>
<div class="t" style="left:128.47px;top:328.93px;font-size:13.2px;color:#000;letter-spacing:-0.354px;">584</div>
<div class="t" style="left:128.33px;top:348.93px;font-size:13.2px;color:#000;letter-spacing:-0.283px;">634</div>
<div class="t" style="left:135.78px;top:368.93px;font-size:13.2px;color:#000;letter-spacing:-0.919px;">91</div>
<div class="t" style="left:128.92px;top:388.93px;font-size:13.2px;color:#000;letter-spacing:-0.496px;">745</div>
<div class="t" style="left:403.89px;top:248.93px;font-size:13.2px;color:#000;letter-spacing:-0.369px;">143</div>
<div class="t" style="left:154.86px;top:248.93px;font-size:13.2px;color:#000;letter-spacing:-0.1px;">=A2-$D$2</div>
<svg style="left:0;top:0" width="1028" height="300" viewBox="0 0 1028 300"><rect x="181.700" y="240.500" width="33.900" height="31.100" rx="8.300" fill="none" stroke="#f00f0f" stroke-width="3"/></svg>
<div class="a" style="left:1px;top:665px;width:1026px;height:29px;background:#e6e6e6"></div>
<div class="a" style="left:2px;top:666px;width:1004px;height:1px;background:#a0a0a0"></div>
<svg style="left:28px;top:676px" width="4.500" height="7" viewBox="0 0 4.500 7"><path d="M4.500 0v7L0 3.500z" fill="#c3c3c3"/></svg>
<svg style="left:56.800px;top:676px" width="4.500" height="7" viewBox="0 0 4.500 7"><path d="M0 0v7l4.500-3.500z" fill="#c3c3c3"/></svg>
<div class="a" style="left:101px;top:666px;width:107px;height:25px;background:#fff;border-left:1px solid #ababab;border-right:1px solid #ababab;border-bottom:2px solid #1a7040"></div>
<div class="t" style="left:112.74px;top:672.5px;font-size:13px;color:#1a7040;letter-spacing:-0.036px;font-weight:bold;">microexcel.ru</div>
<svg style="left:241px;top:672px" width="16" height="16" viewBox="0 0 16 16"><circle cx="8" cy="8" r="7.300" fill="none" stroke="#666" stroke-width="1.200"/><path d="M8 4v8M4 8h8" stroke="#666" stroke-width="1.600"/></svg>
<div class="a" style="left:616px;top:675px;width:2px;height:2px;background:#b0b0b0"></div>
<div class="a" style="left:616px;top:679px;width:2px;height:2px;background:#b0b0b0"></div>
<div class="a" style="left:616px;top:683px;width:2px;height:2px;background:#b0b0b0"></div>
<div class="a" style="left:633px;top:673px;width:15px;height:15px;background:#fff;border:1px solid #ababab"></div>
<svg style="left:638px;top:677px" width="4" height="7" viewBox="0 0 4 7"><path d="M4 0v7L0 3.500z" fill="#606060"/></svg>
<div class="a" style="left:648px;top:673px;width:316px;height:15px;background:#fff;border:1px solid #ababab"></div>
<div class="a" style="left:964px;top:674px;width:27px;height:13px;background:#dadada"></div>
<div class="a" style="left:991px;top:673px;width:15px;height:15px;background:#fff;border:1px solid #ababab"></div>
<svg style="left:997px;top:677px" width="4" height="7" viewBox="0 0 4 7"><path d="M0 0v7l4-3.500z" fill="#606060"/></svg>
<div class="a" style="left:1px;top:694px;width:1026px;height:22px;background:#f3f3f3;border-top:1px solid #c8c8c8"></div>
<div class="t" style="left:8.69px;top:699.12px;font-size:11.2px;color:#333;letter-spacing:0.204px;">Правка</div>
<svg style="left:73px;top:698.500px" width="13.500" height="12" viewBox="0 0 13.500 12"><rect x="2" y="2" width="11" height="9.500" fill="#fff" stroke="#5a5a5a"/><rect x="6" y="1.500" width="7.500" height="2.800" fill="#5a5a5a"/><circle cx="2.400" cy="2.400" r="2.400" fill="#5a5a5a"/><path d="M4 6.200h8M4 8.200h8M4 10h8" stroke="#5a5a5a" stroke-dasharray="1.600 .9" stroke-width=".9"/></svg>
<svg style="left:739px;top:698px" width="14" height="13" viewBox="0 0 14 13"><path d="M0.500 0.500h13v12h-13zM0.500 4.500h13M0.500 8.500h13M5 0.500v12M9.500 0.500v12" fill="none" stroke="#555"/></svg>
<svg style="left:777px;top:698px" width="14" height="13" viewBox="0 0 14 13"><path d="M0.500 0.500h13v12h-13z" fill="none" stroke="#555"/><path d="M3.500 3.500h7v6h-7zM5 5.500h4M5 7.500h4" fill="none" stroke="#555"/></svg>
<svg style="left:815px;top:698px" width="14" height="13" viewBox="0 0 14 13"><path d="M0.500 0.500h13v12h-13z" fill="none" stroke="#555"/><path d="M5.500 0.500v6h8M9.500 0.500v6" fill="none" stroke="#555"/></svg>
<div class="a" style="left:846px;top:704px;width:7px;height:2px;background:#555"></div>
<div class="a" style="left:857px;top:705px;width:99px;height:1px;background:#bbb"></div>
<div class="a" style="left:906px;top:701px;width:1px;height:8px;background:#999"></div>
<div class="a" style="left:959px;top:704px;width:8px;height:2px;background:#555"></div>
<div class="a" style="left:962px;top:701px;width:2px;height:8px;background:#555"></div>
<div class="t" style="left:978.55px;top:699.52px;font-size:11.2px;color:#a0a0a0;letter-spacing:-0.601px;">100 %</div>
<div class="a" style="left:0;top:65px;width:1px;height:652px;background:#0a7840"></div>
<div class="a" style="left:1027px;top:65px;width:1px;height:652px;background:#0a7840"></div>
<div class="a" style="left:0;top:716px;width:1028px;height:1px;background:#0a7840"></div>
<div class="a" style="left:1005px;top:204px;width:22px;height:462px;background:#e6e6e6"></div>
<div class="a" style="left:1005px;top:223px;width:1px;height:443px;background:#a0a0a0"></div>
<div class="a" style="left:1009px;top:206px;width:15px;height:15px;background:#fff;border:1px solid #ababab"></div>
<svg style="left:1013px;top:211px" width="7" height="4" viewBox="0 0 7 4"><path d="M0 4h7L3.500 0z" fill="#666"/></svg>
<div class="a" style="left:1009px;top:220px;width:15px;height:412px;background:#fff;border:1px solid #ababab"></div>
<div class="a" style="left:1009px;top:632px;width:15px;height:20px;background:#dadada"></div>
<div class="a" style="left:1009px;top:652px;width:15px;height:15px;background:#fff;border:1px solid #ababab"></div>
<svg style="left:1013px;top:658px" width="7" height="4" viewBox="0 0 7 4"><path d="M0 0h7L3.500 4z" fill="#666"/></svg>
</body></html>
